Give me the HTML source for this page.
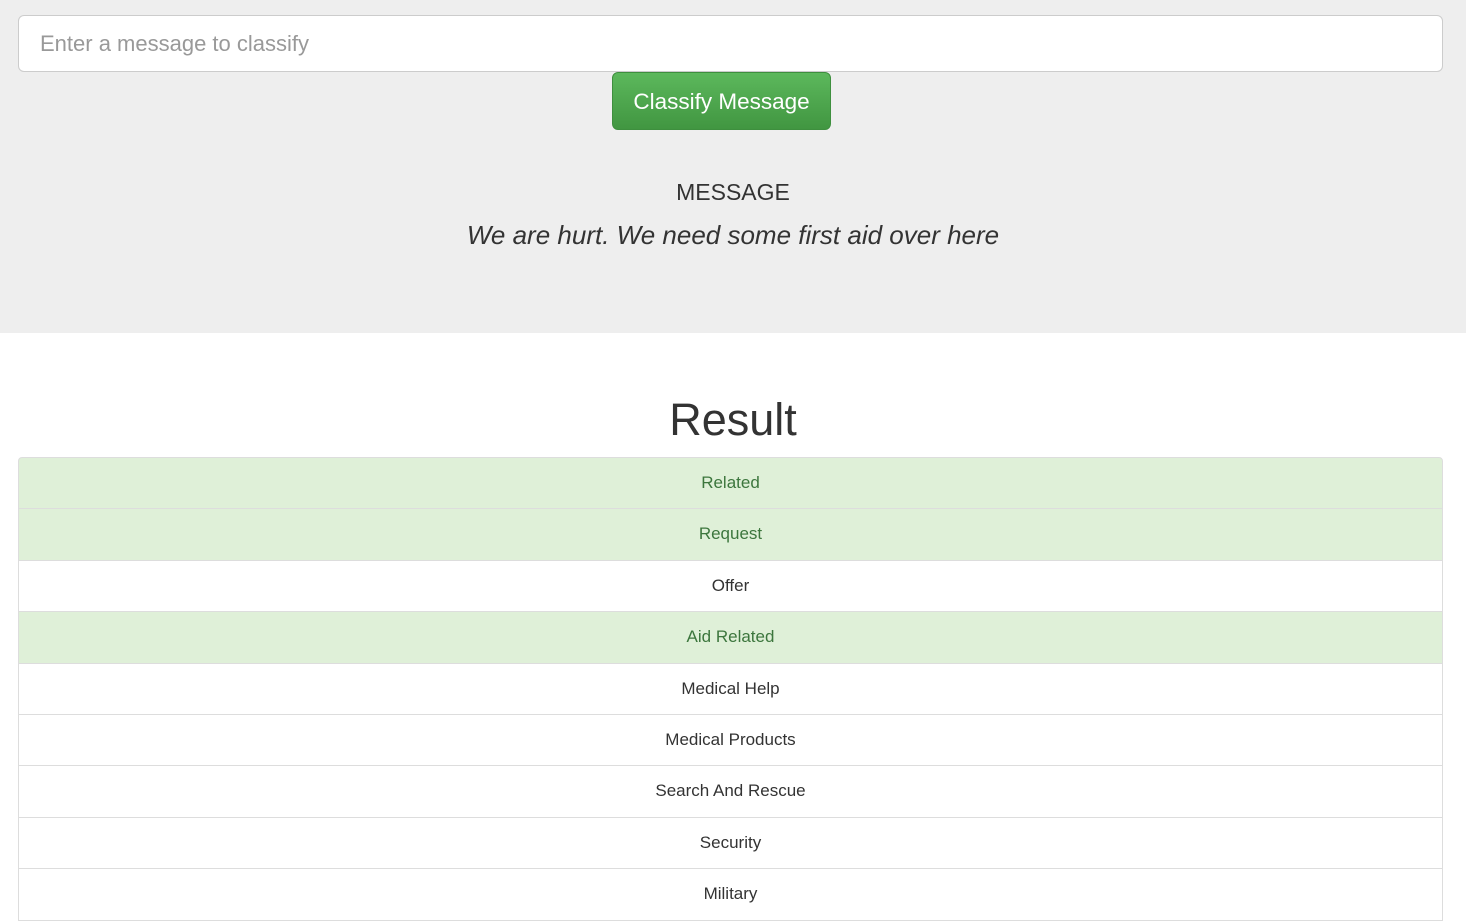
<!DOCTYPE html>
<html><head><style>
*{box-sizing:border-box;margin:0;padding:0}
body{width:1466px;height:878px;overflow:hidden;background:#fff;font-family:"Liberation Sans",sans-serif;color:#333;position:relative}
.jumbo{position:absolute;left:0;top:0;width:1466px;height:333px;background:#eee}
.inp{position:absolute;left:18px;top:15px;width:1425px;height:57px;background:#fff;border:1px solid #ccc;border-radius:6px;font-size:22px;color:#999;padding:14px 21px;line-height:28px}
.btn{position:absolute;left:612px;top:72px;width:219px;height:58px;border-radius:6px;background:linear-gradient(#5cb85c,#419641);border:1px solid #3e8f3e;color:#fff;font-size:22.5px;text-align:center;line-height:58px}
.msg{position:absolute;left:0;width:1466px;text-align:center}
.it{position:absolute;left:18px;width:1425px;height:52.4px;border:1px solid #ddd;text-align:center;font-size:17px;line-height:50px;background:#fff;color:#333}
.s{background:#dff0d8;color:#3c763d}
</style></head><body>
<div class="jumbo"></div>
<div class="inp">Enter a message to classify</div>
<div class="btn">Classify Message</div>
<div class="msg" style="top:179px;font-size:23px;">MESSAGE</div>
<div class="msg" style="top:220px;font-size:26px;font-style:italic">We are hurt. We need some first aid over here</div>
<div class="msg" style="top:394px;font-size:45px;">Result</div>
<div class="it s" style="top:457px;border-radius:4px 4px 0 0">Related</div>
<div class="it s" style="top:508.4px">Request</div>
<div class="it" style="top:559.8px">Offer</div>
<div class="it s" style="top:611.2px">Aid Related</div>
<div class="it" style="top:662.6px">Medical Help</div>
<div class="it" style="top:714px">Medical Products</div>
<div class="it" style="top:765.4px">Search And Rescue</div>
<div class="it" style="top:816.8px">Security</div>
<div class="it" style="top:868.2px">Military</div>
</body></html>
